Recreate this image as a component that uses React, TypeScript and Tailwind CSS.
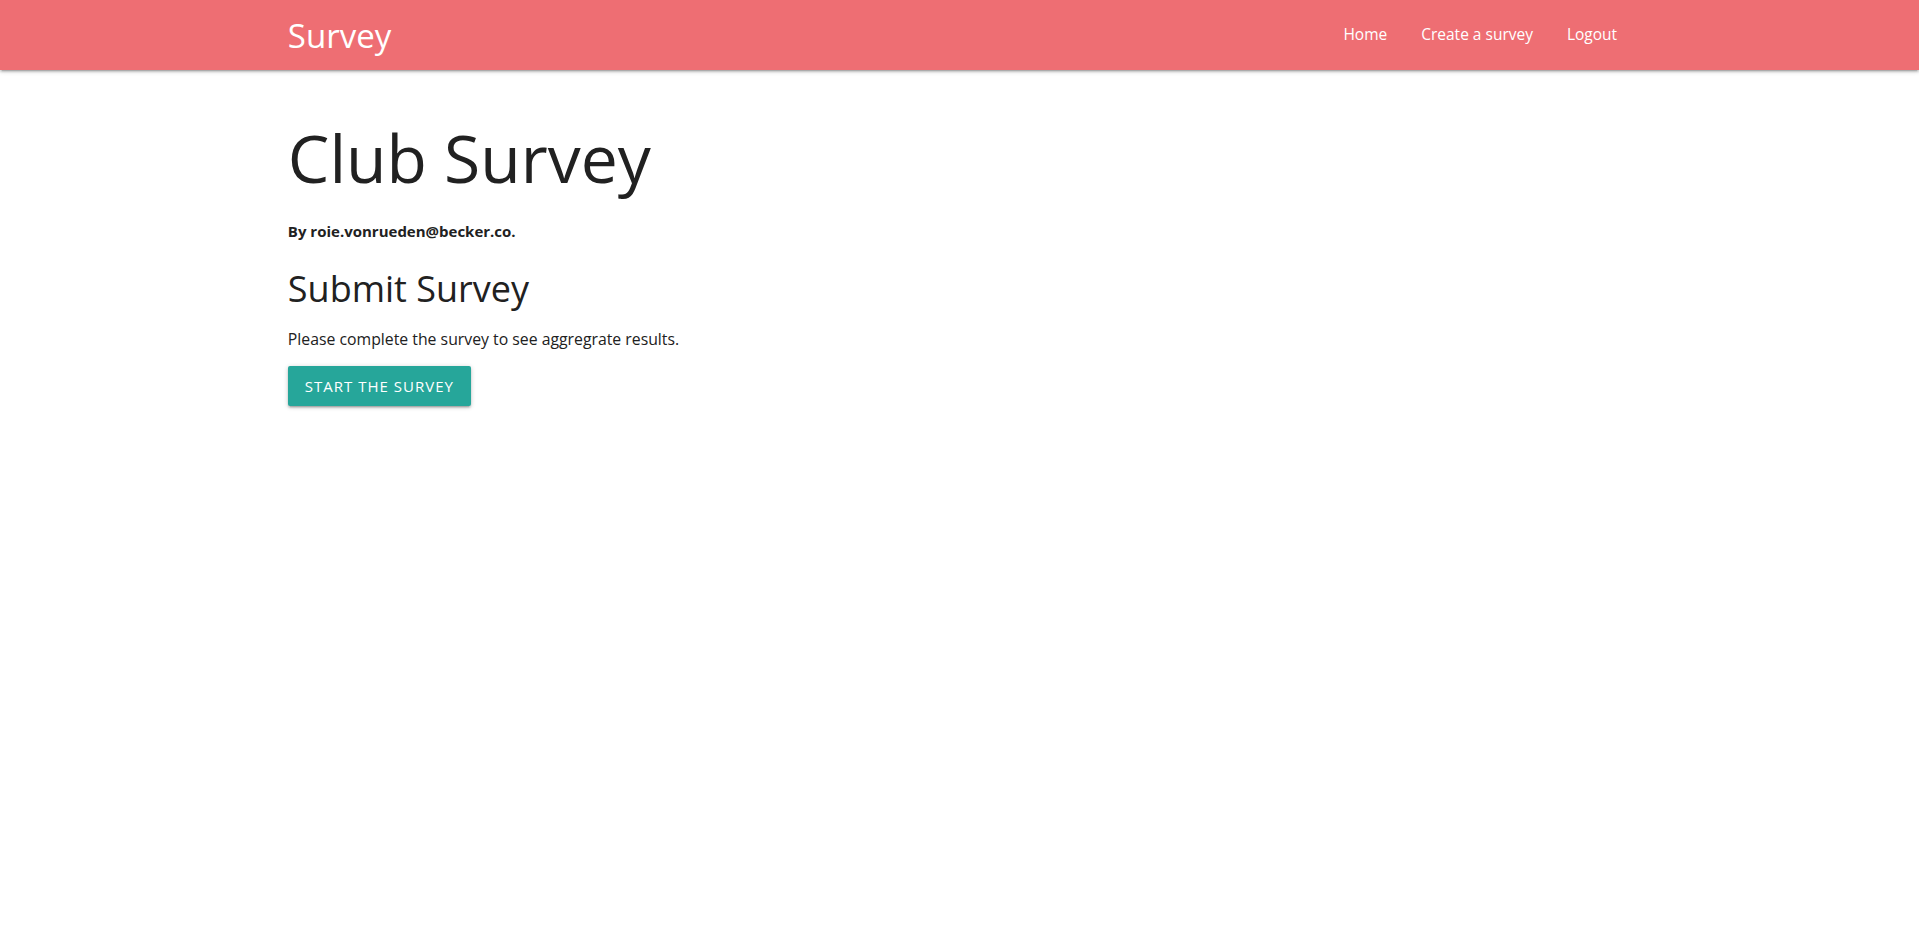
import React from "react";

export default function App() {
  return (
    <div className="min-h-[945px] bg-white text-[#212121]" style={{ fontFamily: '"Open Sans", "Noto Sans", sans-serif' }}>
      <nav className="h-[70px] bg-[#ee6e73] shadow-[0_2px_2px_0_rgba(0,0,0,0.14),0_3px_1px_-2px_rgba(0,0,0,0.12),0_1px_5px_0_rgba(0,0,0,0.2)]">
        <div className="mx-auto flex h-full w-[70%] items-center justify-between">
          <a className="text-[33px] leading-none text-white">Survey</a>
          <ul className="flex h-full items-center text-[15.5px] text-white">
            <li className="px-[17px]">Home</li>
            <li className="px-[17px]">Create a survey</li>
            <li className="pl-[17px] pr-[14px]">Logout</li>
          </ul>
        </div>
      </nav>
      <main className="mx-auto w-[70%]">
        <h1 className="mt-[47px] text-[66px] leading-[80px] font-normal">Club Survey</h1>
        <p className="mt-[24px] text-[15px] leading-[20px] font-bold">By roie.vonrueden@becker.co.</p>
        <h3 className="mt-[26px] text-[36px] leading-[44px] font-normal">Submit Survey</h3>
        <p className="mt-[16px] text-[15.8px] leading-[24px]">Please complete the survey to see aggregrate results.</p>
        <button className="mt-[15px] h-[40px] rounded-[2px] bg-[#26a69a] px-[17px] text-[15px] uppercase tracking-[1px] text-white shadow-[0_2px_2px_0_rgba(0,0,0,0.14),0_3px_1px_-2px_rgba(0,0,0,0.12),0_1px_5px_0_rgba(0,0,0,0.2)]">
          Start the survey
        </button>
      </main>
    </div>
  );
}
